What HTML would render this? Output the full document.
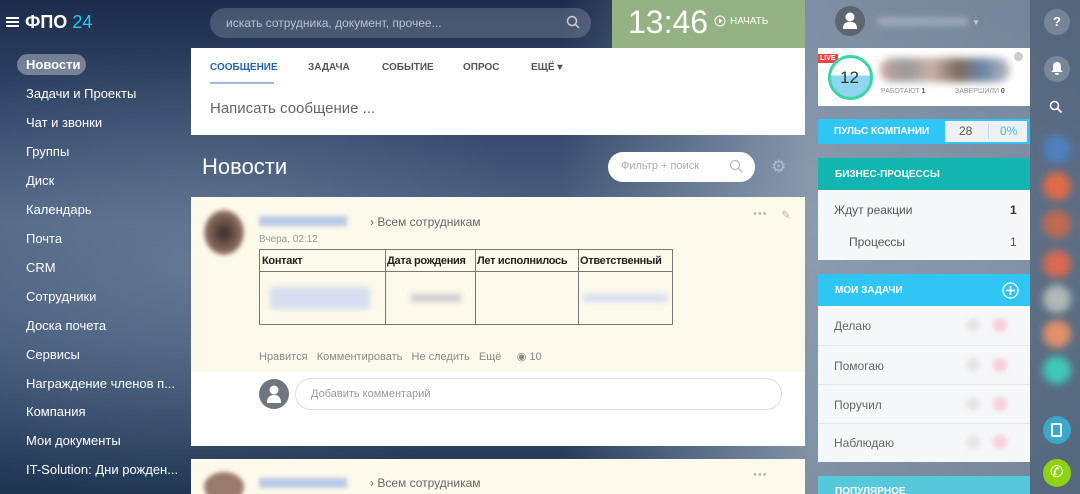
<!DOCTYPE html>
<html><head><meta charset="utf-8"><style>
*{margin:0;padding:0;box-sizing:border-box}
html,body{width:1080px;height:494px;overflow:hidden}
body{position:relative;font-family:"Liberation Sans",sans-serif;
background:linear-gradient(180deg,#1d2c4c 0%,#34496a 25%,#4d6280 45%,#3e5575 70%,#1e3552 100%);}
.bg2{position:absolute;left:0;top:0;width:1080px;height:494px;background:linear-gradient(90deg,rgba(160,175,192,0) 0%,rgba(160,175,192,0) 52%,rgba(160,175,192,.75) 75%,rgba(150,165,182,.7) 100%)}
.bg3{position:absolute;left:0;top:0;width:620px;height:494px;background:radial-gradient(ellipse at 30% 55%,rgba(130,150,175,.45),rgba(0,0,0,0) 60%)}
.a{position:absolute}
.menu div{position:absolute;left:26px;color:#fff;font-size:13px}
.w{background:#fff}
.tab{position:absolute;top:62px;font-size:10px;font-weight:bold;color:#555}
.side{position:absolute;left:818px;width:212px}
.dot{position:absolute;width:14px;height:14px;border-radius:50%}
table td{white-space:nowrap;overflow:hidden}
</style></head><body>
<div class="bg2"></div><div class="bg3"></div>
<div class="a" style="left:1030px;top:0;width:50px;height:494px;background:rgba(40,60,85,.4)"></div>
<!-- logo -->
<div class="a" style="left:6px;top:17px;width:13px;height:2px;background:#fff;box-shadow:0 4px 0 #fff,0 8px 0 #fff"></div>
<div class="a" style="left:25px;top:12px;font-size:18px;font-weight:bold;color:#fff">ФПО <span style="color:#2fc6f6;font-weight:normal">24</span></div>
<div class="menu">
<div style="left:17px;top:54px;width:69px;height:21px;background:rgba(255,255,255,.35);border-radius:11px"></div>
<div style="top:57px;font-weight:bold">Новости</div>
<div style="top:86px">Задачи и Проекты</div>
<div style="top:115px">Чат и звонки</div>
<div style="top:144px">Группы</div>
<div style="top:173px">Диск</div>
<div style="top:202px">Календарь</div>
<div style="top:231px">Почта</div>
<div style="top:260px">CRM</div>
<div style="top:289px">Сотрудники</div>
<div style="top:318px">Доска почета</div>
<div style="top:347px">Сервисы</div>
<div style="top:376px">Награждение членов п...</div>
<div style="top:404px">Компания</div>
<div style="top:433px">Мои документы</div>
<div style="top:462px">IT-Solution: Дни рожден...</div>
</div>
<!-- search -->
<div class="a" style="left:210px;top:8px;width:381px;height:30px;border-radius:15px;background:rgba(255,255,255,.18)"></div>
<div class="a" style="left:226px;top:16px;font-size:12px;color:#b8c2d0">искать сотрудника, документ, прочее...</div>
<svg class="a" style="left:566px;top:15px" width="14" height="14"><circle cx="6" cy="6" r="4.5" stroke="#ccd" stroke-width="1.5" fill="none"/><path d="M9 9l4 4" stroke="#ccd" stroke-width="1.5"/></svg>
<!-- clock -->
<div class="a" style="left:612px;top:0;width:193px;height:48px;background:#94b283"></div>
<div class="a" style="left:628px;top:4px;font-size:32px;color:#fff">13:46</div>
<svg class="a" style="left:714px;top:15px" width="12" height="12"><circle cx="6" cy="6" r="5" stroke="#fff" fill="none"/><path d="M5 3.5v5l3.5-2.5z" fill="#fff"/></svg>
<div class="a" style="left:730px;top:16px;font-size:10px;color:#fff">НАЧАТЬ</div>
<!-- composer -->
<div class="a w" style="left:191px;top:48px;width:614px;height:87px"></div>
<div class="tab" style="left:210px;color:#2067b0">СООБЩЕНИЕ</div>
<div class="a" style="left:210px;top:82px;width:64px;height:2px;background:#9dbbe4"></div>
<div class="tab" style="left:308px">ЗАДАЧА</div>
<div class="tab" style="left:382px">СОБЫТИЕ</div>
<div class="tab" style="left:463px">ОПРОС</div>
<div class="tab" style="left:531px">ЕЩЁ ▾</div>
<div class="a" style="left:210px;top:100px;font-size:15px;color:#666">Написать сообщение ...</div>
<div class="a" style="left:202px;top:154px;font-size:22px;color:#fff">Новости</div>
<div class="a w" style="left:608px;top:152px;width:147px;height:30px;border-radius:15px"></div>
<div class="a" style="left:621px;top:160px;font-size:11px;color:#aaa">Фильтр + поиск</div>
<svg class="a" style="left:729px;top:159px" width="14" height="14"><circle cx="6" cy="6" r="4.5" stroke="#bbb" stroke-width="1.3" fill="none"/><path d="M9 9l4 4" stroke="#bbb" stroke-width="1.3"/></svg>
<div class="a" style="left:771px;top:157px;font-size:17px;color:#b0bdcc">⚙</div>
<!-- post -->
<div class="a" style="left:191px;top:197px;width:614px;height:175px;background:#fdfaeb"></div>
<div class="a w" style="left:191px;top:372px;width:614px;height:74px"></div>
<div class="a" style="left:204px;top:210px;width:40px;height:45px;border-radius:50%;background:radial-gradient(#3a2c2a,#8a6a5c 60%,#e8ddd0);filter:blur(2px)"></div>
<div class="a" style="left:259px;top:216px;width:88px;height:10px;background:#b8c8e6;filter:blur(2px)"></div>
<div class="a" style="left:370px;top:215px;font-size:12px;color:#666">› Всем сотрудникам</div>
<div class="a" style="left:259px;top:234px;font-size:10px;color:#999">Вчера, 02:12</div>
<div class="a" style="left:753px;top:208px;color:#bbb;font-size:11px;letter-spacing:1px">•••</div>
<div class="a" style="left:781px;top:208px;color:#bbb;font-size:12px">✎</div>
<table class="a" style="left:259px;top:249px;border-collapse:collapse;table-layout:fixed;width:413px;font-size:11px;color:#222;border:1px solid #777">
<colgroup><col style="width:126px"><col style="width:90px"><col style="width:103px"><col style="width:94px"></colgroup>
<tr style="height:22px;font-weight:bold;letter-spacing:-0.3px"><td style="border:1px solid #777;padding:0 2px">Контакт</td><td style="border:1px solid #777;padding:0 1px">Дата рождения</td><td style="border:1px solid #777;padding:0 1px">Лет исполнилось</td><td style="border:1px solid #777;padding:0 1px">Ответственный</td></tr>
<tr style="height:53px"><td style="border:1px solid #777"><div style="margin-left:10px;width:100px;height:22px;background:#d4def0;filter:blur(3px)"></div></td><td style="border:1px solid #777"><div style="margin-left:25px;width:50px;height:8px;background:#ccc;filter:blur(3px)"></div></td><td style="border:1px solid #777"></td><td style="border:1px solid #777"><div style="margin:0 4px;height:8px;background:#d4def0;filter:blur(3px)"></div></td></tr>
</table>
<div class="a" style="left:259px;top:350px;font-size:11px;color:#888">Нравится &nbsp; Комментировать &nbsp; Не следить &nbsp; Ещё &nbsp; &nbsp; ◉ 10</div>
<div class="a" style="left:259px;top:379px;width:30px;height:30px;border-radius:50%;background:#6e7780"></div>
<svg class="a" style="left:266px;top:384px" width="16" height="20"><circle cx="8" cy="6" r="4.5" fill="#fff"/><path d="M1 19c0-6 3-8 7-8s7 2 7 8z" fill="#fff"/></svg>
<div class="a w" style="left:295px;top:378px;width:487px;height:32px;border-radius:16px;border:1px solid #ddd"></div>
<div class="a" style="left:311px;top:388px;font-size:11px;color:#999">Добавить комментарий</div>
<div class="a" style="left:191px;top:459px;width:614px;height:40px;background:#fdfaeb"></div>
<div class="a" style="left:204px;top:472px;width:40px;height:30px;border-radius:50%;background:#9a7a6a;filter:blur(2px)"></div>
<div class="a" style="left:259px;top:478px;width:88px;height:10px;background:#b8c8e6;filter:blur(2px)"></div>
<div class="a" style="left:370px;top:476px;font-size:12px;color:#666">› Всем сотрудникам</div>
<div class="a" style="left:753px;top:469px;color:#bbb;font-size:11px;letter-spacing:1px">•••</div>
<!-- right -->
<div class="a" style="left:835px;top:6px;width:30px;height:30px;border-radius:50%;background:#5d6670"></div>
<svg class="a" style="left:842px;top:11px" width="16" height="19"><circle cx="8" cy="6" r="4.5" fill="#fff"/><path d="M1 18c0-6 3-7 7-7s7 1 7 7z" fill="#fff"/></svg>
<div class="a" style="left:878px;top:17px;width:90px;height:9px;background:rgba(255,255,255,.25);filter:blur(3px)"></div>
<div class="a" style="left:972px;top:18px;color:#ccd;font-size:8px">▼</div>
<div class="side w" style="top:48px;height:58px"></div>
<div class="a" style="left:818px;top:54px;background:#e94343;color:#fff;font-size:7px;font-weight:bold;padding:1px 2px">LIVE</div>
<div class="a" style="left:828px;top:55px;width:45px;height:45px;border-radius:50%;border:3px solid #3bd6a5;background:linear-gradient(#fff 45%,#8fd6f0 45%)"></div>
<div class="a" style="left:840px;top:68px;font-size:17px;color:#333">12</div>
<div class="a" style="left:880px;top:58px;width:130px;height:24px;border-radius:12px;background:linear-gradient(90deg,#c8a8a0,#999,#c9b0a8,#7a6a60,#6a88a8,#bbb);filter:blur(4px)"></div>
<div class="a" style="left:881px;top:88px;font-size:7px;color:#999">РАБОТАЮТ <b style="color:#555">1</b></div>
<div class="a" style="left:955px;top:88px;font-size:7px;color:#999">ЗАВЕРШИЛИ <b style="color:#555">0</b></div>
<div class="a" style="left:1014px;top:52px;width:9px;height:9px;border-radius:50%;background:#ccc"></div>
<div class="side" style="top:119px;height:25px;background:#2fc6f6"></div>
<div class="a" style="left:834px;top:126px;font-size:10px;font-weight:bold;color:#fff">ПУЛЬС КОМПАНИИ</div>
<div class="a" style="left:945px;top:121px;width:82px;height:21px;background:#eef0f2"></div>
<div class="a" style="left:959px;top:124px;font-size:12px;color:#555">28</div>
<div class="a" style="left:988px;top:124px;width:1px;height:15px;background:#bde"></div>
<div class="a" style="left:1000px;top:124px;font-size:12px;color:#2fc6f6">0%</div>
<div class="side" style="top:158px;height:32px;background:#13b5b0"></div>
<div class="a" style="left:835px;top:169px;font-size:10px;font-weight:bold;color:#fff">БИЗНЕС-ПРОЦЕССЫ</div>
<div class="side" style="top:190px;height:70px;background:#f6f7f8"></div>
<div class="a" style="left:834px;top:203px;font-size:12px;color:#555">Ждут реакции</div>
<div class="a" style="left:1010px;top:203px;font-size:12px;font-weight:bold;color:#333">1</div>
<div class="a" style="left:849px;top:235px;font-size:12px;color:#555">Процессы</div>
<div class="a" style="left:1010px;top:235px;font-size:12px;color:#555">1</div>
<div class="side" style="top:274px;height:32px;background:#2fc6f6"></div>
<div class="a" style="left:835px;top:285px;font-size:10px;font-weight:bold;color:#fff">МОИ ЗАДАЧИ</div>
<svg class="a" style="left:1002px;top:282px" width="17" height="17"><circle cx="8.5" cy="8.5" r="7.5" stroke="#fff" stroke-width="1.3" fill="none"/><path d="M8.5 4v9M4 8.5h9" stroke="#fff" stroke-width="1.6"/></svg>
<div class="side" style="top:306px;height:156px;background:#f6f7f8"></div>
<div class="a" style="left:818px;top:345px;width:212px;height:1px;background:#e6e8ea;box-shadow:0 39px 0 #e6e8ea,0 78px 0 #e6e8ea"></div>
<div class="a" style="left:834px;top:319px;font-size:12px;color:#666">Делаю</div>
<div class="a" style="left:834px;top:359px;font-size:12px;color:#666">Помогаю</div>
<div class="a" style="left:834px;top:398px;font-size:12px;color:#666">Поручил</div>
<div class="a" style="left:834px;top:436px;font-size:12px;color:#666">Наблюдаю</div>
<div class="dot" style="left:966px;top:318px;background:#e6e6e6;box-shadow:0 40px 0 #e6e6e6,0 79px 0 #e6e6e6,0 117px 0 #e6e6e6;filter:blur(2px)"></div>
<div class="dot" style="left:993px;top:318px;background:#f7d0dc;box-shadow:0 40px 0 #f7d0dc,0 79px 0 #f7d0dc,0 117px 0 #f7d0dc;filter:blur(2px)"></div>
<div class="side" style="top:476px;height:20px;background:#55c9db"></div>
<div class="a" style="left:835px;top:486px;font-size:10px;font-weight:bold;color:#fff">ПОПУЛЯРНОЕ</div>
<!-- far right -->
<div class="a" style="left:1044px;top:9px;width:26px;height:26px;border-radius:50%;background:rgba(255,255,255,.2);color:#fff;text-align:center;font-weight:bold;font-size:13px;line-height:26px">?</div>
<div class="a" style="left:1044px;top:56px;width:26px;height:26px;border-radius:50%;background:rgba(255,255,255,.2)"></div>
<svg class="a" style="left:1050px;top:61px" width="14" height="15"><path d="M7 1c3 0 4 2 4 5v3l2 2H1l2-2V6c0-3 1-5 4-5z M5 12h4a2 2 0 01-4 0z" fill="#fff"/></svg>
<svg class="a" style="left:1049px;top:100px" width="14" height="14"><circle cx="5.5" cy="5.5" r="4" stroke="#fff" stroke-width="1.5" fill="none"/><path d="M8.5 8.5l4 4" stroke="#fff" stroke-width="1.8"/></svg>
<div class="a" style="left:1043px;top:135px;width:28px;height:28px;border-radius:50%;background:#4f7fc0;filter:blur(4px)"></div>
<div class="a" style="left:1043px;top:172px;width:28px;height:28px;border-radius:50%;background:#e06a4a;filter:blur(4px)"></div>
<div class="a" style="left:1043px;top:210px;width:28px;height:28px;border-radius:50%;background:#c06a50;filter:blur(4px)"></div>
<div class="a" style="left:1043px;top:250px;width:28px;height:28px;border-radius:50%;background:#d86a50;filter:blur(4px)"></div>
<div class="a" style="left:1043px;top:285px;width:28px;height:28px;border-radius:50%;background:#b0b8b8;filter:blur(4px)"></div>
<div class="a" style="left:1043px;top:320px;width:28px;height:28px;border-radius:50%;background:#e0906a;filter:blur(4px)"></div>
<div class="a" style="left:1043px;top:356px;width:28px;height:28px;border-radius:50%;background:#40c8b8;filter:blur(4px)"></div>
<div class="a" style="left:1043px;top:416px;width:28px;height:28px;border-radius:50%;background:#3aa8c8"></div>
<div class="a" style="left:1051px;top:423px;width:11px;height:14px;border:2px solid #fff;border-radius:2px"></div>
<div class="a" style="left:1043px;top:459px;width:28px;height:28px;border-radius:50%;background:#8fd20f"></div>
<div class="a" style="left:1050px;top:462px;color:#fff;font-size:16px">✆</div>
</body></html>
